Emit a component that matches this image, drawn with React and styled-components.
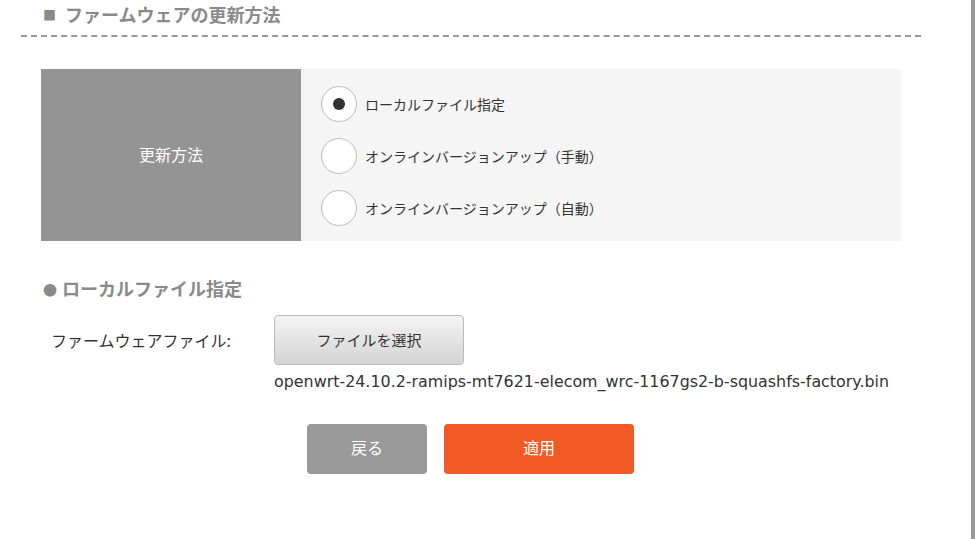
import React from "react";
import styled, { createGlobalStyle } from "styled-components";

const Global = createGlobalStyle`
  html, body { margin: 0; padding: 0; background: #fff; }
  body { font-family: "Noto Sans CJK JP", "Noto Sans", sans-serif; color: #333; }
`;

const Page = styled.div`
  width: 975px;
  height: 539px;
  box-sizing: border-box;
  border-right: 4px solid #999;
  padding-left: 21px;
`;

const Section = styled.div`
  width: 900px;
`;

const Heading = styled.h2`
  margin: 0;
  padding: 0 0 0 22px;
  height: 37px;
  box-sizing: border-box;
  font-size: 18px;
  font-weight: 700;
  color: #8a8a8a;
  line-height: 28px;
  border-bottom: 2px dashed #999;
`;

const Mark = styled.span`
  display: inline-block;
  font-size: ${p => p.$size}px;
  margin-right: ${p => p.$gap}px;
  vertical-align: ${p => p.$lift}px;
`;

const Table = styled.div`
  display: grid;
  grid-template-columns: 260px 600px;
  margin: 32px 0 0 20px;
  height: 172px;
`;

const HeadCell = styled.div`
  background: #949494;
  color: #fff;
  font-size: 16px;
  display: flex;
  align-items: center;
  justify-content: center;
  padding-bottom: 2px;
`;

const BodyCell = styled.div`
  background: #f5f5f5;
  display: flex;
  flex-direction: column;
  gap: 16px;
  padding: 17px 0 0 20px;
`;

const RadioRow = styled.label`
  display: flex;
  align-items: center;
  gap: 8px;
  font-size: 14px;
  line-height: 20px;
  color: #333;
  height: 36px;
`;

const Circle = styled.span`
  width: 34px;
  height: 34px;
  flex: none;
  border-radius: 50%;
  border: 1px solid #bbb;
  background: #fff;
  display: flex;
  align-items: center;
  justify-content: center;
  &::after {
    content: "";
    width: 12px;
    height: 12px;
    border-radius: 50%;
    background: ${p => (p.$checked ? "#333" : "transparent")};
  }
`;

const SubHeading = styled.h3`
  margin: 35px 0 0 22px;
  font-size: 18px;
  font-weight: 700;
  color: #8a8a8a;
  line-height: 24px;
`;

const FileGrid = styled.div`
  display: grid;
  grid-template-columns: 253px auto;
  margin: 14px 0 0 0;
`;

const FileLabel = styled.div`
  padding-left: 30px;
  font-size: 16px;
  display: flex;
  align-items: center;
  height: 50px;
`;

const FileCol = styled.div`
  display: flex;
  flex-direction: column;
  align-items: flex-start;
`;

const FileButton = styled.button`
  width: 190px;
  height: 50px;
  border: 1px solid #bbb;
  border-radius: 4px;
  background: linear-gradient(#f4f4f4, #d4d4d4);
  font-family: inherit;
  font-size: 15px;
  color: #333;
  padding-bottom: 2px;
`;

const FileName = styled.div`
  font-family: "DejaVu Sans", sans-serif;
  font-size: 15.9px;
  line-height: 22px;
  margin-top: 6px;
  color: #333;
`;

const Actions = styled.div`
  display: flex;
  gap: 17px;
  margin: 31px 0 0 286px;
`;

const Btn = styled.button`
  width: ${p => p.$w}px;
  height: 50px;
  border: none;
  border-radius: 4px;
  background: ${p => p.$bg};
  color: #fff;
  font-family: inherit;
  font-size: 16px;
  padding: 0 0 4px;
`;

const options = [
  { label: "ローカルファイル指定", checked: true },
  { label: "オンラインバージョンアップ（手動）" },
  { label: "オンラインバージョンアップ（自動）" },
];

export default function App() {
  return (
    <>
      <Global />
      <Page>
        <Section>
          <Heading>
            <Mark $size={13} $gap={9} $lift={2}>■</Mark>ファームウェアの更新方法
          </Heading>
          <Table>
            <HeadCell>更新方法</HeadCell>
            <BodyCell>
              {options.map(o => (
                <RadioRow key={o.label}>
                  <Circle $checked={o.checked} />
                  {o.label}
                </RadioRow>
              ))}
            </BodyCell>
          </Table>
          <SubHeading>
            <Mark $size={14} $gap={5} $lift={1}>●</Mark>ローカルファイル指定
          </SubHeading>
          <FileGrid>
            <FileLabel>ファームウェアファイル:</FileLabel>
            <FileCol>
              <FileButton>ファイルを選択</FileButton>
              <FileName>openwrt-24.10.2-ramips-mt7621-elecom_wrc-1167gs2-b-squashfs-factory.bin</FileName>
            </FileCol>
          </FileGrid>
          <Actions>
            <Btn $w={120} $bg="#999">戻る</Btn>
            <Btn $w={190} $bg="#f15a24">適用</Btn>
          </Actions>
        </Section>
      </Page>
    </>
  );
}
